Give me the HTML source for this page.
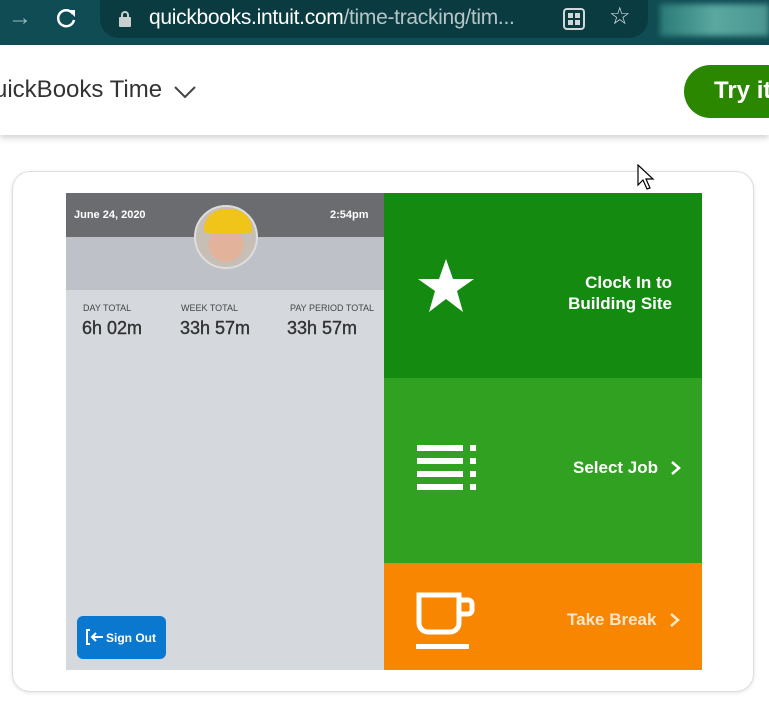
<!DOCTYPE html>
<html><head><meta charset="utf-8"><style>
*{margin:0;padding:0;box-sizing:border-box}
body{width:769px;height:719px;background:#fff;font-family:"Liberation Sans",sans-serif;position:relative;overflow:hidden}
.abs{position:absolute}
</style></head><body>
<div class="abs" style="left:0;top:0;width:769px;height:45px;background:#0f4c53"></div>
<div class="abs" style="left:8px;top:4px;color:#9bb7ba;font-size:24px">→</div>
<svg class="abs" style="left:56px;top:7px" width="22" height="22" viewBox="0 0 22 22"><path d="M17 7A8 8 0 1 0 18 13" fill="none" stroke="#fff" stroke-width="2.5"/><path d="M12 3h7v7z" fill="#fff"/></svg>
<div class="abs" style="left:100px;top:0;width:548px;height:38px;background:#093b40;border-radius:0 0 19px 19px"></div>
<svg class="abs" style="left:118px;top:10px" width="14" height="18"><rect x="1" y="7" width="12" height="10" rx="1" fill="#c8d0d0"/><path d="M4 8V5a3 3 0 0 1 6 0v3" fill="none" stroke="#c8d0d0" stroke-width="2"/></svg>
<div class="abs" style="left:149px;top:6px;font-size:21px;color:#fff;white-space:nowrap;letter-spacing:-0.3px">quickbooks.intuit.com<span style="color:#b6c6c8">/time-tracking/tim...</span></div>
<svg class="abs" style="left:563px;top:8px" width="22" height="22"><rect x="1" y="1" width="20" height="20" rx="3" fill="none" stroke="#d0d8d8" stroke-width="2"/><rect x="5" y="5" width="5" height="5" fill="#d0d8d8"/><rect x="12" y="5" width="5" height="5" fill="#d0d8d8"/><rect x="5" y="12" width="5" height="5" fill="#d0d8d8"/><rect x="12" y="12" width="5" height="5" fill="#d0d8d8"/></svg>
<div class="abs" style="left:609px;top:2px;font-size:24px;color:#dfe6e6">☆</div>
<div class="abs" style="left:660px;top:4px;width:109px;height:32px;background:linear-gradient(90deg,#2a7a78,#5aa8a0,#4a9590);filter:blur(3px)"></div>
<div class="abs" style="left:0;top:45px;width:769px;height:90px;background:#fff;box-shadow:0 3px 6px rgba(0,0,0,.18)"></div>
<div class="abs" style="left:-6px;top:76px;font-size:24px;color:#333;">uickBooks Time</div>
<svg class="abs" style="left:174px;top:85px" width="22" height="14"><path d="M1 2l10 10L21 2" fill="none" stroke="#444" stroke-width="2"/></svg>
<div class="abs" style="left:684px;top:65px;width:110px;height:53px;background:#2b8700;border-radius:27px;color:#fff;font-weight:bold;font-size:24px;padding:12px 0 0 30px">Try it</div>
<div class="abs" style="left:12px;top:171px;width:742px;height:521px;border:1.5px solid #ddd;border-radius:18px;box-shadow:0 1px 4px rgba(0,0,0,.1)"></div>
<div class="abs" style="left:66px;top:193px;width:318px;height:477px;background:#d5d9de"></div>
<div class="abs" style="left:66px;top:193px;width:318px;height:44px;background:#6b6c70"></div>
<div class="abs" style="left:66px;top:237px;width:318px;height:53px;background:#bec1c7"></div>
<div class="abs" style="left:74px;top:209px;color:#fff;font-size:11px;font-weight:bold">June 24, 2020</div>
<div class="abs" style="left:330px;top:209px;color:#fff;font-size:11px;font-weight:bold">2:54pm</div>
<div class="abs" style="left:194px;top:205px;width:64px;height:64px;border-radius:50%;background:radial-gradient(circle at 50% 62%,#e2b29a 0 17px,#c7bfb5 18px);overflow:hidden;border:2px solid #ddd"><div style="position:absolute;left:8px;top:2px;width:48px;height:24px;background:#f0c419;border-radius:24px 24px 4px 4px"></div></div>
<div class="abs" style="left:83px;top:303px;font-size:9px;color:#444">DAY TOTAL</div>
<div class="abs" style="left:181px;top:303px;font-size:9px;color:#444">WEEK TOTAL</div>
<div class="abs" style="left:290px;top:303px;font-size:9px;color:#444">PAY PERIOD TOTAL</div>
<div class="abs" style="left:82px;top:318px;font-size:18px;color:#333;-webkit-text-stroke:0.4px #333">6h 02m</div>
<div class="abs" style="left:180px;top:318px;font-size:18px;color:#333;-webkit-text-stroke:0.4px #333">33h 57m</div>
<div class="abs" style="left:287px;top:318px;font-size:18px;color:#333;-webkit-text-stroke:0.4px #333">33h 57m</div>
<div class="abs" style="left:77px;top:616px;width:89px;height:43px;background:#0b78cf;border-radius:6px;color:#fff;font-size:12px;font-weight:bold;padding:15px 0 0 29px">Sign Out</div>
<svg class="abs" style="left:85px;top:628px" width="20" height="18"><path d="M5 2H2v14h3" fill="none" stroke="#fff" stroke-width="2"/><path d="M18 9H7M11 5L7 9l4 4" fill="none" stroke="#fff" stroke-width="2"/></svg>
<div class="abs" style="left:384px;top:193px;width:318px;height:185px;background:#148a11"></div>
<div class="abs" style="left:384px;top:378px;width:318px;height:185px;background:#30a121"></div>
<div class="abs" style="left:384px;top:563px;width:318px;height:107px;background:#f88600"></div>
<svg class="abs" style="left:417px;top:258px" width="58" height="56" viewBox="0 0 58 56"><path d="M29 1l7 20h21l-17 12 6 21-17-13-17 13 6-21L1 21h21z" fill="#fff"/></svg>
<div class="abs" style="left:540px;top:272px;width:132px;text-align:right;color:#fff;font-size:17px;font-weight:bold;line-height:21px">Clock In to<br>Building Site</div>
<svg class="abs" style="left:417px;top:445px" width="60" height="46"><g fill="#fff"><rect x="0" y="0" width="46" height="6"/><rect x="0" y="13" width="46" height="6"/><rect x="0" y="26" width="46" height="6"/><rect x="0" y="39" width="46" height="6"/><rect x="53" y="0" width="6" height="6"/><rect x="53" y="13" width="6" height="6"/><rect x="53" y="26" width="6" height="6"/><rect x="53" y="39" width="6" height="6"/></g></svg>
<div class="abs" style="left:573px;top:458px;color:#fff;font-size:17px;font-weight:bold">Select Job</div>
<svg class="abs" style="left:670px;top:460px" width="12" height="16"><path d="M2 2l7 6-7 6" fill="none" stroke="#fff" stroke-width="2.5"/></svg>
<svg class="abs" style="left:416px;top:592px" width="62" height="60"><path d="M3 3h40v28a9 9 0 0 1-9 9H12a9 9 0 0 1-9-9z" fill="none" stroke="#fff" stroke-width="5"/><path d="M43 8h9a4 4 0 0 1 4 4v6a4 4 0 0 1-4 4h-9" fill="none" stroke="#fff" stroke-width="5"/><rect x="0" y="52" width="53" height="5" fill="#fff"/></svg>
<div class="abs" style="left:567px;top:610px;color:#fde6c8;font-size:17px;font-weight:bold">Take Break</div>
<svg class="abs" style="left:669px;top:612px" width="12" height="16"><path d="M2 2l7 6-7 6" fill="none" stroke="#fde6c8" stroke-width="2.5"/></svg>
<svg class="abs" style="left:637px;top:164px" width="20" height="28"><path d="M1 1v20l5-5 4 9 3-1-4-9h7z" fill="#fff" stroke="#000" stroke-width="1.2"/></svg>
</body></html>
